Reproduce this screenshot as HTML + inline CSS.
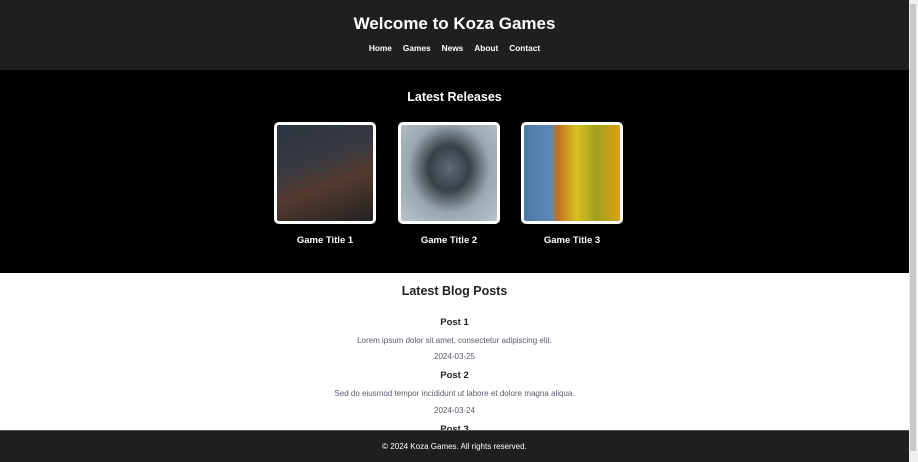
<!DOCTYPE html>
<html><head><style>
body{margin:0;font-family:"Liberation Sans",Arial,sans-serif;width:918px;height:462px;overflow:hidden;position:relative;background:#fff}
.wrap{position:absolute;left:0;top:0;width:909px;height:462px;overflow:hidden}
header{background:#1f1f1f;height:70px;text-align:center;color:#fff}
header h1{margin:0;padding-top:14px;font-size:17px;font-weight:bold;line-height:20px}
nav{margin-top:9px;font-size:8.3px;font-weight:bold;line-height:10px}
nav span{margin:0 5.5px}
.rel{background:#000;height:203px;text-align:center;color:#fff;position:relative}
.rel h2{margin:0;padding-top:20px;font-size:12.5px;line-height:14px}
.g{position:absolute;top:52px;width:102px;text-align:center}
.img{width:96px;height:96px;border:3px solid #fff;border-radius:5px;overflow:hidden}
.g p{margin:11px 0 0;font-size:9.5px;font-weight:bold}
.blog{text-align:center;color:#222}
.blog h2{margin:0;padding-top:11px;font-size:12.5px;line-height:14px}
.blog h3{font-size:9.5px;margin:0;line-height:12px}
.blog p{font-size:8px;color:#5a5a6a;margin:0;line-height:10px}
footer{position:absolute;left:0;top:430px;width:909px;height:32px;background:#1f1f1f;color:#fff;font-size:8px;text-align:center;line-height:32px;border-top:1px solid #555}
.sb{position:absolute;left:909px;top:0;width:9px;height:462px;background:#f0f0f0}
.sb div{position:absolute;left:1px;top:4px;width:6px;height:447px;background:#c8c8c8}
</style></head><body>
<div class="wrap">
<header><h1>Welcome to Koza Games</h1>
<nav><span>Home</span><span>Games</span><span>News</span><span>About</span><span>Contact</span></nav></header>
<div class="rel"><h2>Latest Releases</h2>
<div class="g" style="left:274px"><div class="img" style="background:linear-gradient(160deg,#2a3440,#3a3a40 40%,#553a30 60%,#222 100%)"></div><p>Game Title 1</p></div>
<div class="g" style="left:398px"><div class="img" style="background:radial-gradient(ellipse at 50% 45%,#5a6a78 0,#3a4048 30%,#9aa8b2 60%,#b8c4cc 100%)"></div><p>Game Title 2</p></div>
<div class="g" style="left:521px"><div class="img" style="background:linear-gradient(90deg,#4a7aa8 0,#5b8ab8 28%,#c07020 35%,#d8c020 55%,#a0a020 75%,#e0a010 100%)"></div><p>Game Title 3</p></div>
</div>
<div class="blog"><h2>Latest Blog Posts</h2>
<h3 style="margin-top:19px">Post 1</h3>
<p style="margin-top:7px">Lorem ipsum dolor sit amet, consectetur adipiscing elit.</p>
<p style="margin-top:6px">2024-03-25</p>
<h3 style="margin-top:8px">Post 2</h3>
<p style="margin-top:7px">Sed do eiusmod tempor incididunt ut labore et dolore magna aliqua.</p>
<p style="margin-top:7px">2024-03-24</p>
<h3 style="margin-top:8px">Post 3</h3>
</div>
<footer>© 2024 Koza Games. All rights reserved.</footer>
</div>
<div class="sb"><div></div></div>
</body></html>
